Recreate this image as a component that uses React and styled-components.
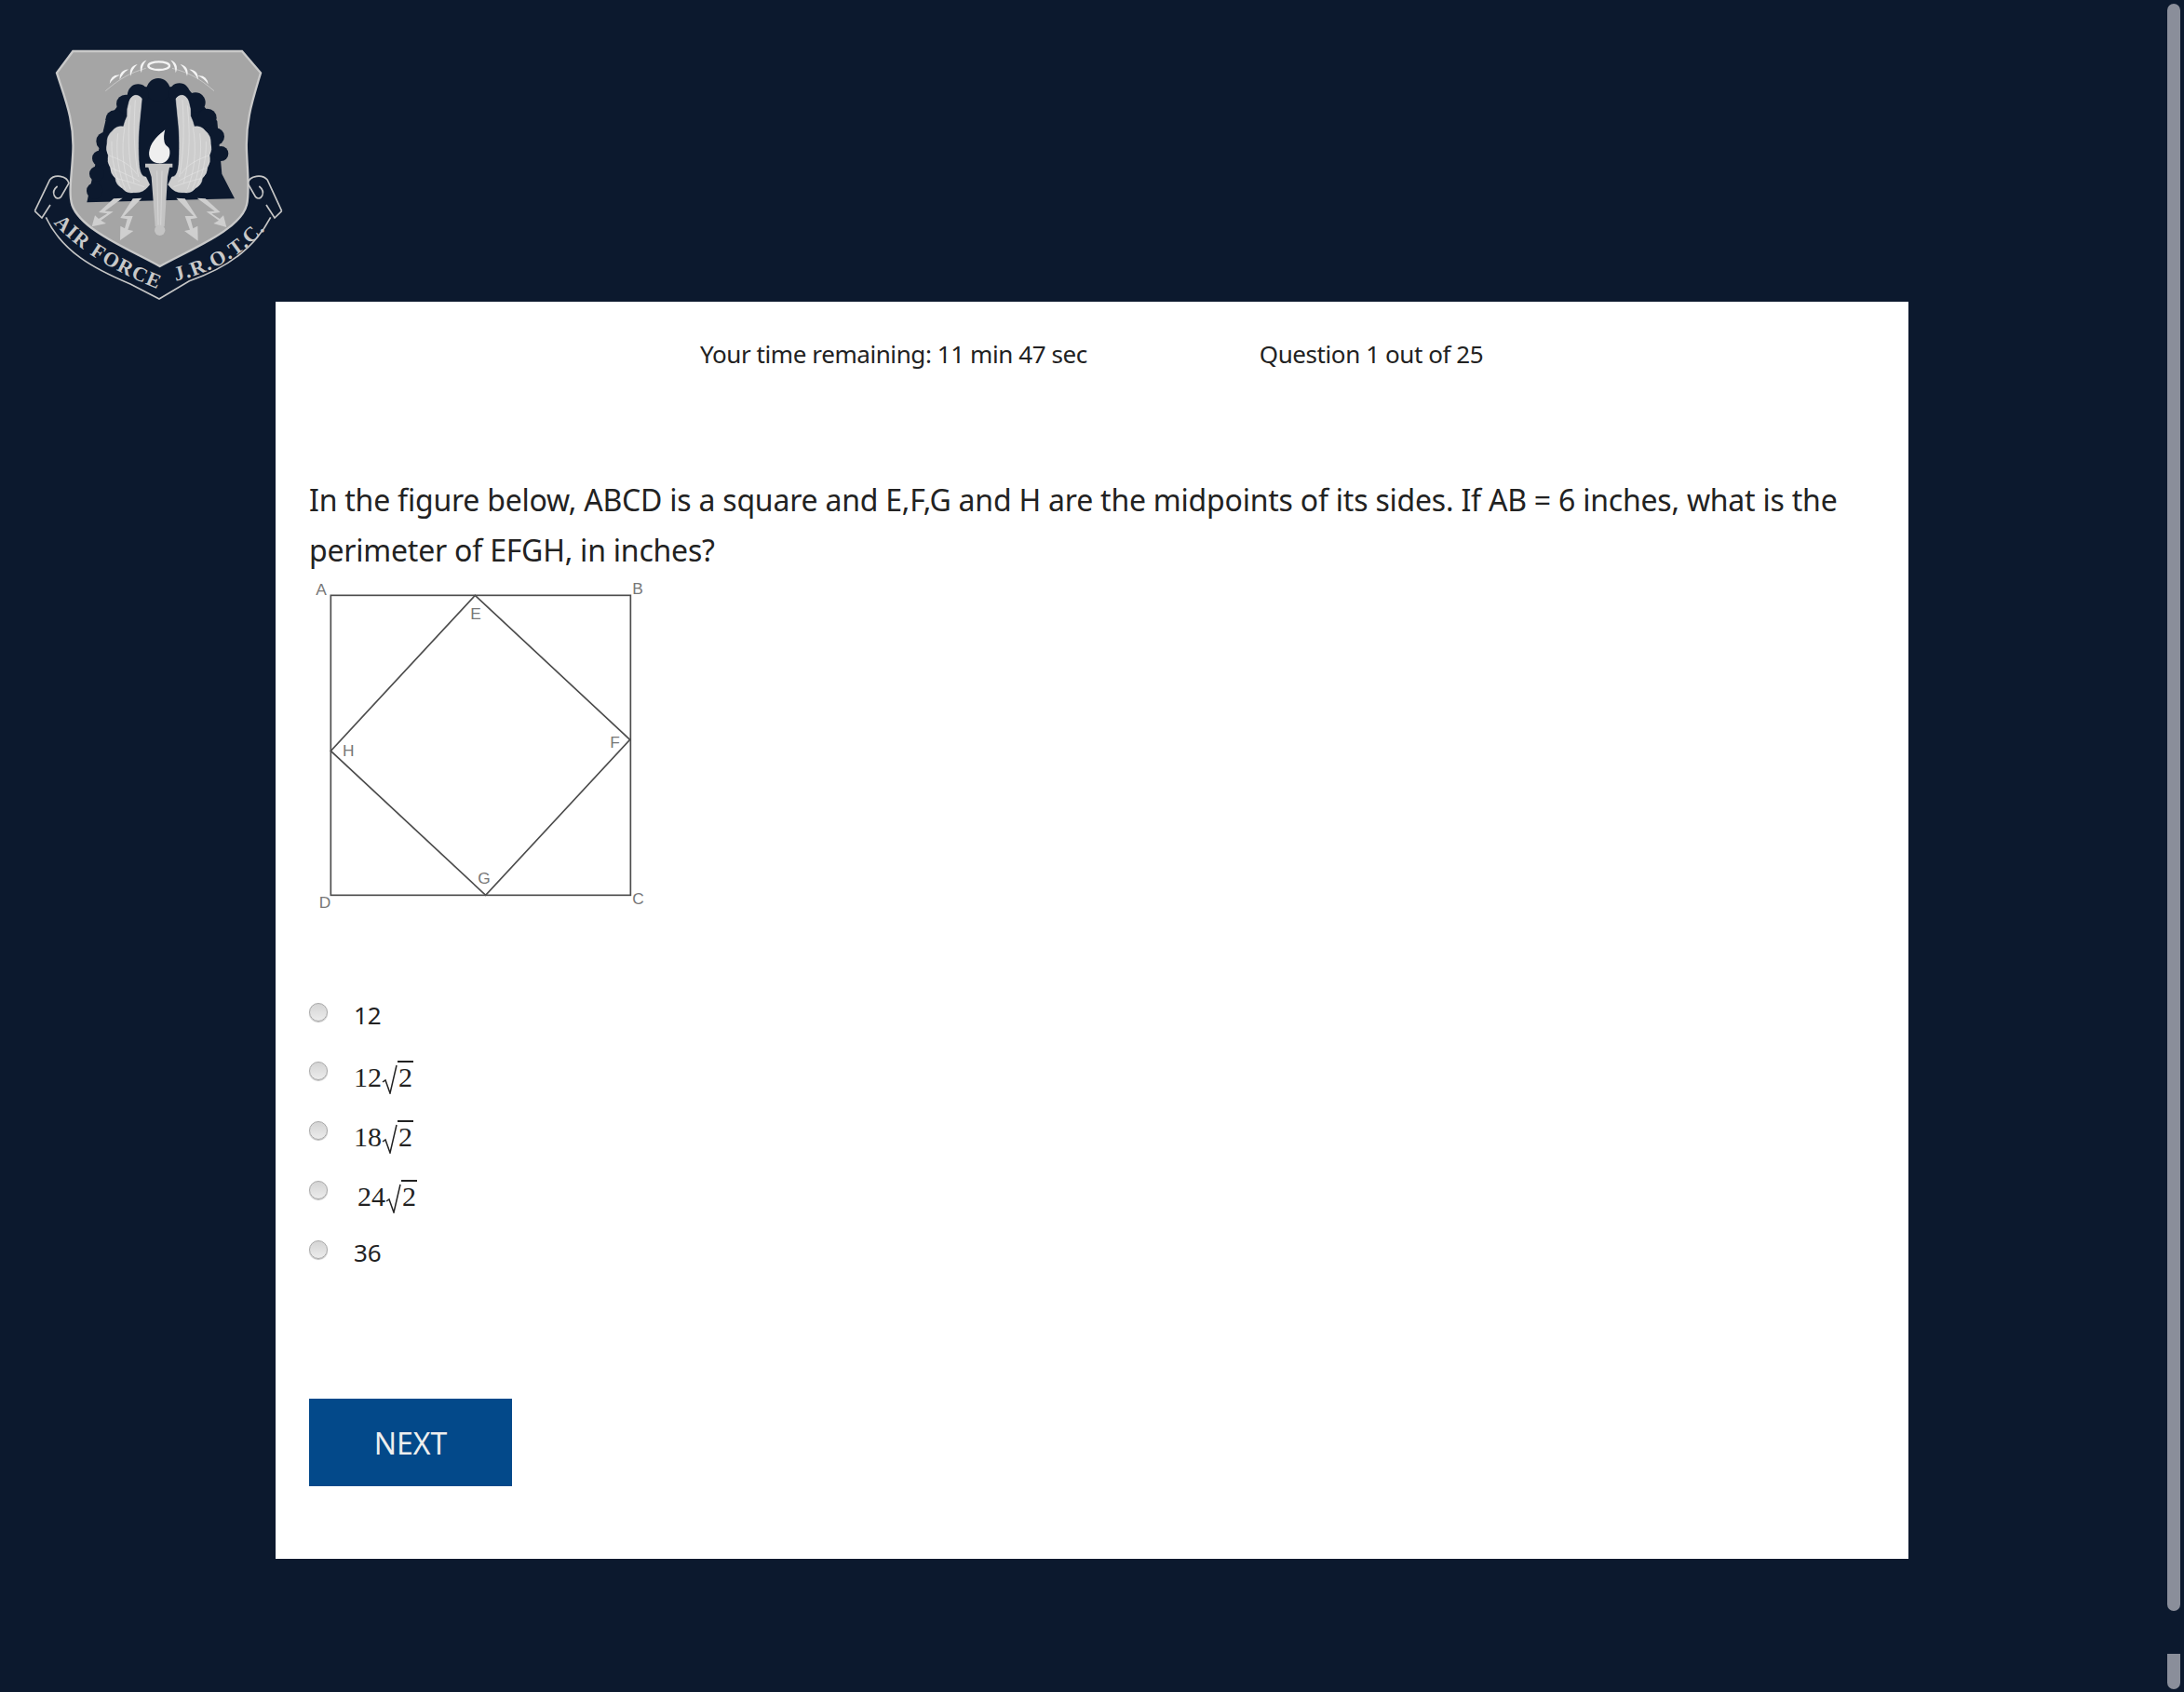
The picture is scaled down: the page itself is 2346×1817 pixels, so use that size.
import React from 'react';
import styled, { createGlobalStyle } from 'styled-components';

const options = [
  { id: 'a', text: '12' },
  { id: 'b', whole: '12' },
  { id: 'c', whole: '18' },
  { id: 'd', whole: '24', shift: 4 },
  { id: 'e', text: '36' },
];

const leaves = [
  [370, 166, -40], [400, 150, -50], [432, 136, -60], [464, 124, -68],
  [558, 124, 68], [592, 136, 60], [624, 150, 50], [654, 168, 40],
];

const bolts = [
  'M395 548 L338 590 L365 592 L325 620 L342 630 L296 640 L306 604 L318 615 L346 598 L318 594 L366 550 Z',
  'M457 548 L400 606 L428 606 L412 650 L430 654 L387 684 L388 638 L402 646 L410 616 L388 612 L428 550 Z',
  'M568 548 L624 606 L596 606 L612 650 L594 654 L638 686 L637 638 L622 646 L614 616 L636 612 L596 550 Z',
  'M635 548 L692 590 L665 592 L705 620 L688 630 L730 642 L720 604 L708 615 L682 598 L710 594 L662 550 Z',
];

// outer edge is a run of feather tips, so it reads scalloped rather than smooth
const wingPath =
  'M457 228 C446 212 424 212 416 238 Q408 262 410 284 Q402 300 398 318 Q376 314 362 332 Q344 346 345 374 Q340 392 349 410 Q344 432 356 450 Q356 470 372 484 Q374 506 394 516 Q408 534 430 530 Q462 534 482 505 L470 480 C455 480 450 460 448 440 C445 400 445 340 450 300 Z';
const featherPath =
  'M436 232 C432 300 428 380 446 480 M420 250 C412 330 410 410 432 500 M402 320 C390 390 396 460 420 520 M380 340 C372 400 382 470 405 522 M360 365 C358 420 372 480 392 515 M349 410 C390 425 420 440 440 470 M356 450 C390 465 420 475 450 495 M372 484 C400 490 430 500 465 512';

const Wing = ({ mirror }) => (
  <g fill="#cdcdcd" stroke="#e8e8e8" strokeWidth="1.5" transform={mirror ? 'matrix(-1 0 0 1 1024 0)' : undefined}>
    <path d={wingPath} />
    <path d={featherPath} fill="none" />
  </g>
);

const Emblem = () => (
  <svg width="330" height="294" viewBox="0 0 990 882" aria-label="Air Force J.R.O.T.C.">
    {/* ribbon and scrolls */}
    <g fill="none" stroke="#c6c6c6" strokeWidth="5">
      <path d="M112 590 L160 490 C175 470 215 475 222 500 L196 545 C180 560 160 530 185 510" />
      <path d="M112 590 L135 612 L162 570" />
      <path d="M148 610 C200 720 300 775 420 825 L513 873 L610 815 C700 785 810 730 872 610" />
      <path d="M908 590 L862 490 C845 470 805 475 798 500 L824 545 C840 560 860 530 835 510" />
      <path d="M908 590 L885 612 L858 570" />
    </g>
    {/* shield */}
    <path
      d="M235 75 L780 75 L840 145 C815 230 790 300 795 400 C798 470 805 530 795 570 C775 650 620 710 515 768 C410 710 260 650 232 570 C220 530 232 470 235 400 C240 300 210 230 183 145 Z"
      fill="#a5a5a5"
      stroke="#c9c9c9"
      strokeWidth="7"
    />
    {/* dark cloud behind the wings */}
    <g fill="#0c192e">
      <path d="M280 562 L756 550 L715 470 L700 300 L600 190 L430 190 L340 300 L300 470 Z" />
      <circle cx="510" cy="200" r="38" />
      <circle cx="445" cy="215" r="34" />
      <circle cx="578" cy="212" r="34" />
      <circle cx="405" cy="245" r="30" />
      <circle cx="630" cy="240" r="32" />
      <circle cx="370" cy="295" r="30" />
      <circle cx="668" cy="290" r="30" />
      <circle cx="340" cy="365" r="30" />
      <circle cx="695" cy="350" r="28" />
      <circle cx="322" cy="420" r="25" />
      <circle cx="712" cy="405" r="24" />
      <circle cx="312" cy="470" r="24" />
      <circle cx="305" cy="525" r="26" />
    </g>
    <Wing />
    <Wing mirror />
    {/* torch */}
    <path d="M532 328 C512 345 490 362 482 392 C476 415 486 432 510 436 C535 438 550 420 547 395 C545 378 535 385 530 368 C527 355 528 342 532 328 Z" fill="#efefef" />
    <path d="M468 437 L556 437 L556 449 L546 449 L540 480 L530 640 L500 640 L488 480 L478 449 L468 449 Z" fill="#c4c4c4" />
    <path d="M506 460 L510 635 M522 460 L518 635" stroke="#e0e0e0" strokeWidth="2" fill="none" />
    <circle cx="515" cy="652" r="17" fill="#c4c4c4" />
    {bolts.map((d) => (
      <path key={d} d={d} fill="#cfcfcf" />
    ))}
    {/* laurel */}
    <path d="M340 203 C390 160 420 145 470 130 M690 203 C640 160 610 145 555 130" fill="none" stroke="#e8e8e8" strokeWidth="1.5" />
    {leaves.map(([x, y, a]) => (
      <path key={x} d="M-22 0 Q0 -22 22 0 Q0 -7 -22 0 Z" transform={`translate(${x} ${y}) rotate(${a})`} fill="#f4f4f4" />
    ))}
    <ellipse cx="512" cy="122" rx="34" ry="13" fill="none" stroke="#f4f4f4" strokeWidth="7" />
    <defs>
      <path id="ribbon-left" d="M172 628 C260 725 380 790 530 850" />
      <path id="ribbon-right" d="M566 815 C680 790 800 730 890 605" />
    </defs>
    <text fontFamily="'Liberation Serif', serif" fontWeight="700" fontSize="66" fill="#c9c9c9" letterSpacing="4">
      <textPath href="#ribbon-left">AIR FORCE</textPath>
    </text>
    <text fontFamily="'Liberation Serif', serif" fontWeight="700" fontSize="66" fill="#c9c9c9" letterSpacing="4">
      <textPath href="#ribbon-right">J.R.O.T.C.</textPath>
    </text>
  </svg>
);

const Figure = () => (
  <svg width="400" height="390" viewBox="0 0 1200 1170" role="img" aria-label="Square ABCD with inscribed EFGH">
    <g fill="none" stroke="#4d4d4d">
      <rect x="136" y="88" width="966" height="966" strokeWidth="5" />
      <path d="M601 88 L1100 553 L635 1054 L136 589 Z" strokeWidth="5" />
    </g>
    <g fontFamily="'Liberation Sans', sans-serif" fontSize="52" fill="#777">
      <text x="88" y="88">A</text>
      <text x="1108" y="84">B</text>
      <text x="1108" y="1082">C</text>
      <text x="98" y="1096">D</text>
      <text x="586" y="165">E</text>
      <text x="1036" y="578">F</text>
      <text x="610" y="1018">G</text>
      <text x="174" y="606">H</text>
    </g>
  </svg>
);

const App = () => {
  return (
    <Page>
      <GlobalStyle />
      <Header>
        <Emblem />
      </Header>
      <Card>
        <Status>
          <StatusItem>Your time remaining: 11 min 47 sec</StatusItem>
          <StatusItem>Question 1 out of 25</StatusItem>
        </Status>
        <Question>
          In the figure below, ABCD is a square and E,F,G and H are the midpoints of its sides. If AB = 6 inches, what is the perimeter of EFGH, in inches?
        </Question>
        <FigureWrap>
          <Figure />
        </FigureWrap>
        <Options>
          {options.map((option) => (
            <Option key={option.id}>
              <Radio type="radio" name="answer" />
              {option.text ? (
                <OptionText>{option.text}</OptionText>
              ) : (
                <MathText $shift={option.shift}>
                  {option.whole}
                  <RadicalSign width="17" height="32" viewBox="0 0 17 32">
                    <path d="M1 19 L4 17 L9 31 L16 1" fill="none" stroke="#222" strokeWidth="1.5" />
                  </RadicalSign>
                  <Radicand>2</Radicand>
                </MathText>
              )}
            </Option>
          ))}
        </Options>
        <NextButton type="button">NEXT</NextButton>
      </Card>
      <ScrollThumb />
      <ScrollThumbLower />
    </Page>
  );
};

const GlobalStyle = createGlobalStyle`
  html, body {
    margin: 0;
    padding: 0;
    background: #0c192e;
  }
`;

const Page = styled.div`
  position: relative;
  height: 1817px;
  overflow: hidden;
  background: #0c192e;
  font-family: 'Noto Sans', sans-serif;
`;

const Header = styled.header`
  height: 294px;
  padding-top: 30px;
  display: flex;
`;

const Card = styled.main`
  width: 1754px;
  height: 1350px;
  box-sizing: border-box;
  margin-left: 296px;
  padding: 36px;
  background: #fff;
  color: #222;
`;

const Status = styled.div`
  display: flex;
  gap: 185px;
  padding-left: 420px;
  font-size: 26px;
  line-height: 40px;
  letter-spacing: -0.42px;
`;

const StatusItem = styled.span`
  white-space: nowrap;
`;

const Question = styled.p`
  margin: 110px 0 0;
  font-size: 32px;
  line-height: 54px;
  letter-spacing: -0.22px;
`;

const FigureWrap = styled.div`
  margin: -8px 0 0 -22px;
  height: 390px;
`;

const Options = styled.div`
  display: flex;
  flex-direction: column;
  margin-top: 59px;
`;

const Option = styled.label`
  display: flex;
  align-items: center;
  gap: 28px;
  height: 64px;

  &:first-child {
    height: 62px;
  }
`;

const Radio = styled.input`
  appearance: none;
  width: 20px;
  height: 20px;
  margin: -6px 0 0;
  border-radius: 50%;
  border: 1px solid #a8a8a8;
  box-sizing: border-box;
  background: linear-gradient(#d4d4d4, #ececec);
  box-shadow: 0 1px 1px #bbb;
`;

const OptionText = styled.span`
  font-size: 26px;
  color: #222;
`;

const MathText = styled.span`
  display: inline-flex;
  align-items: flex-end;
  margin-left: ${(p) => p.$shift || 0}px;
  font-family: 'Liberation Serif', serif;
  font-size: 30px;
  line-height: 32px;
  color: #222;
  padding-top: 6px;
`;

const RadicalSign = styled.svg`
  display: block;
  margin-bottom: -2px;
`;

const Radicand = styled.span`
  border-top: 2px solid #222;
  padding: 0 1px;
`;

const NextButton = styled.button`
  display: block;
  width: 218px;
  height: 94px;
  margin-top: 125px;
  padding: 0;
  border: 0;
  background: #03498a;
  color: #eee;
  font-family: 'Noto Sans', sans-serif;
  font-size: 32px;
`;

const ScrollThumb = styled.div`
  position: absolute;
  left: 2328px;
  top: 4px;
  width: 14px;
  height: 1726px;
  border-radius: 7px;
  background: #8a8e9a;
`;

const ScrollThumbLower = styled.div`
  position: absolute;
  left: 2328px;
  top: 1776px;
  width: 14px;
  height: 38px;
  border-radius: 0 0 7px 7px;
  background: #8a8e9a;
`;

export default App;
